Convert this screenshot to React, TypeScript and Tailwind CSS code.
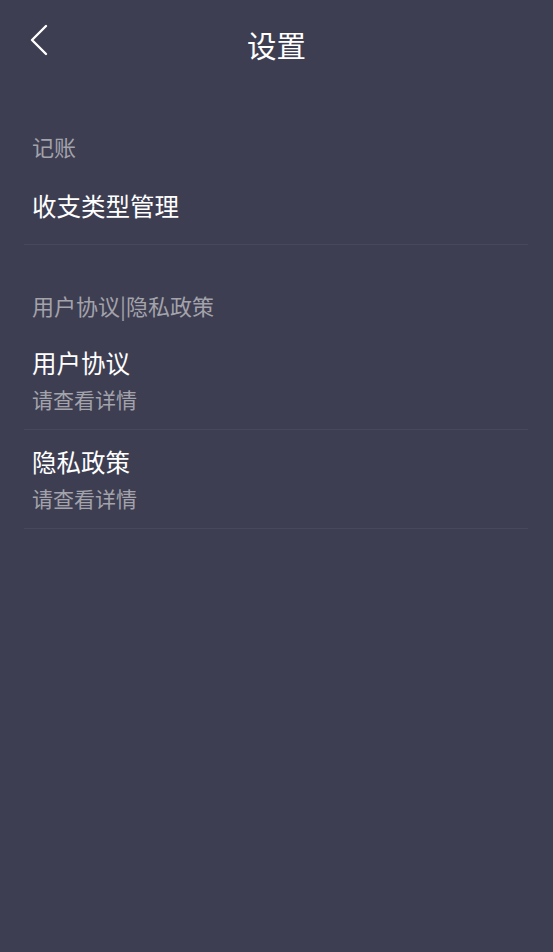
import React from "react";

const font = { fontFamily: '"Noto Sans CJK SC", "Noto Sans", sans-serif' };

function Item({ title, sub }: { title: string; sub?: string }) {
  return (
    <div className="border-b border-[#48485c] px-[8px] pt-[16px] pb-[16px]">
      <div className="text-[24.5px] leading-[32px] text-white">{title}</div>
      {sub && <div className="mt-[6px] text-[21px] leading-[28px] text-[#a3a3ab]">{sub}</div>}
    </div>
  );
}

export default function App() {
  return (
    <div className="min-h-[952px] w-full bg-[#3e3e52]" style={font}>
      <div className="relative flex h-[88px] items-center justify-center">
        <svg className="absolute left-[28px] top-[22px]" width="24" height="36" viewBox="0 0 24 36">
          <path d="M18 4 L4 18 L18 32" fill="none" stroke="#ffffff" strokeWidth="2.4" strokeLinecap="round" strokeLinejoin="round" />
        </svg>
        <div className="text-[29.5px] leading-[36px] text-white">设置</div>
      </div>
      <div className="pl-[24px] pr-[25px]">
        <div className="px-[8px] pt-[44px] text-[22px] leading-[28px] text-[#a3a3ab]">记账</div>
        <div className="border-b border-[#48485c] px-[8px] pt-[30px] pb-[22px]">
          <div className="text-[24.5px] leading-[32px] text-white">收支类型管理</div>
        </div>
        <div className="px-[8px] pt-[46px] text-[22px] leading-[28px] text-[#a3a3ab]">用户协议|隐私政策</div>
        <div className="h-[12px]" />
        <Item title="用户协议" sub="请查看详情" />
        <Item title="隐私政策" sub="请查看详情" />
      </div>
    </div>
  );
}
